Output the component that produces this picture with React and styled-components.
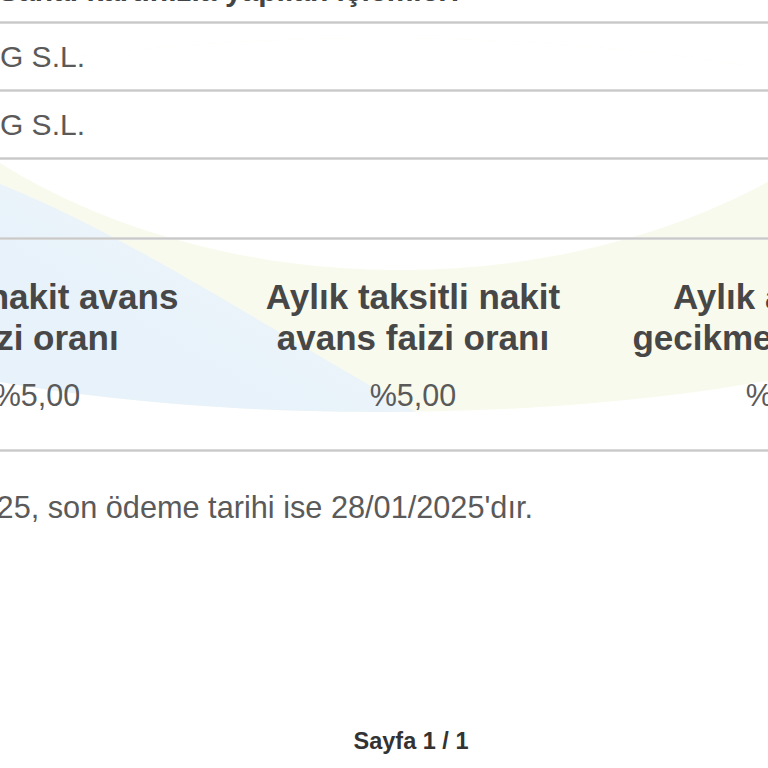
import styled, { createGlobalStyle } from "styled-components";

const GlobalStyle = createGlobalStyle`
  html, body {
    margin: 0;
    padding: 0;
    background: #fff;
  }
  body {
    font-family: "Liberation Sans", Arial, sans-serif;
  }
`;

const Page = styled.div`
  position: relative;
  width: 768px;
  height: 768px;
  overflow: hidden;
  background: #fff;
`;

const Watermark = styled.svg`
  position: absolute;
  top: 0;
  left: 0;
  z-index: 0;
`;

const Content = styled.div`
  position: relative;
  z-index: 1;
  display: flex;
  flex-direction: column;
`;

// text that is cut at the left edge: right end is fixed, the rest runs off screen
const Clip = styled.div`
  width: ${(p) => p.$end}px;
  display: flex;
  justify-content: flex-end;
  white-space: nowrap;
`;

const Title = styled.div`
  margin-top: -26px;
  height: 34px;
  font-size: 30px;
  line-height: 34px;
  font-weight: bold;
  color: #444;
`;

const Divider = styled.div`
  height: 3px;
  margin-top: ${(p) => p.$top || 0}px;
  background: linear-gradient(#e2e2e2, #c8c8c8, #e2e2e2);
`;

const Row = styled.div`
  height: 65px;
  display: flex;
  align-items: center;
  font-size: 30px;
  color: #5a5a5a;
`;

const Spacer = styled.div`
  height: 77px;
`;

const Rates = styled.div`
  display: grid;
  grid-template-columns: repeat(3, 376px);
  margin-left: -151px;
  padding: 36px 0 36px;
`;

const Rate = styled.div`
  display: flex;
  flex-direction: column;
  align-items: center;
  padding: 0 22px;
  text-align: center;
`;

const RateLabel = styled.div`
  font-size: 35px;
  line-height: 41px;
  font-weight: bold;
  color: #474747;
`;

const RateValue = styled.div`
  margin-top: 19px;
  font-size: 30.5px;
  line-height: 36px;
  color: #5a5a5a;
`;

const Note = styled.div`
  margin-top: 38px;
  font-size: 30.7px;
  line-height: 36px;
  color: #5a5a5a;
`;

const Footer = styled.div`
  margin-top: 201px;
  width: 822px;
  text-align: center;
  font-size: 23.5px;
  line-height: 28px;
  font-weight: bold;
  color: #333;
`;

const rates = [
  { label: "Aylık nakit avans faizi oranı", value: "%5,00" },
  { label: "Aylık taksitli nakit avans faizi oranı", value: "%5,00" },
  { label: "Aylık alışveriş gecikme faizi oranı", value: "%5,30" },
];

const merchants = ["PARKING S.L.", "PARKING S.L."];

const App = () => {
  return (
    <Page>
      <GlobalStyle />
      <Watermark width="768" height="460" viewBox="0 0 768 460">
        <defs>
          <clipPath id="wm">
            <ellipse cx="380" cy="225" rx="700" ry="187" />
          </clipPath>
          <linearGradient id="blue" x1="0" y1="1" x2="0.9" y2="0.1">
            <stop offset="0.4" stopColor="#e7f2fb" />
            <stop offset="1" stopColor="#f2f7f6" />
          </linearGradient>
        </defs>
        <g clipPath="url(#wm)">
          <rect x="0" y="0" width="768" height="460" fill="#f9faee" />
          <ellipse cx="400" cy="-150" rx="600" ry="420" fill="#fff" />
          <path d="M -10 180 C 120 230, 250 318, 430 420 L -10 440 Z" fill="url(#blue)" />
        </g>
      </Watermark>
      <Content>
        <Title>
          <Clip $end={460}>Sanal kartınızla yapılan işlemler:</Clip>
        </Title>
        <Divider $top={13} />
        {merchants.map((m, i) => (
          <div key={i}>
            <Row>
              <Clip $end={85}>{m}</Clip>
            </Row>
            <Divider />
          </div>
        ))}
        <Spacer />
        <Divider />
        <Rates>
          {rates.map((r) => (
            <Rate key={r.label}>
              <RateLabel>{r.label}</RateLabel>
              <RateValue>{r.value}</RateValue>
            </Rate>
          ))}
        </Rates>
        <Divider />
        <Note>
          <Clip $end={533}>
            Hesap kesim tarihi 18/01/2025, son ödeme tarihi ise 28/01/2025'dır.
          </Clip>
        </Note>
        <Footer>Sayfa 1 / 1</Footer>
      </Content>
    </Page>
  );
};

export default App;
